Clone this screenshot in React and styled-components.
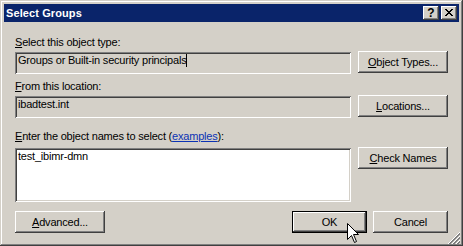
import React from "react";
import styled, { createGlobalStyle } from "styled-components";

const GlobalStyle = createGlobalStyle`
  html, body { margin: 0; padding: 0; background: #d4d0c8; }
  body { font-family: "Liberation Sans", Arial, sans-serif; font-size: 11px; color: #000; letter-spacing: -0.2px; }
`;

const raised = `
  box-shadow: inset -1px -1px #404040, inset 1px 1px #ffffff,
    inset -2px -2px #808080, inset 2px 2px #d4d0c8;
`;

const sunken = `
  box-shadow: inset 1px 1px #808080, inset -1px -1px #ffffff,
    inset 2px 2px #404040, inset -2px -2px #d4d0c8;
`;

const Window = styled.div`
  position: relative;
  width: 463px;
  height: 246px;
  box-sizing: border-box;
  padding: 4px;
  background: #d4d0c8;
  box-shadow: inset -1px -1px #404040, inset 1px 1px #d4d0c8,
    inset -2px -2px #808080, inset 2px 2px #ffffff;
  display: flex;
  flex-direction: column;
  overflow: hidden;
`;

const TitleBar = styled.div`
  height: 18px;
  background: #0a246a;
  display: flex;
  align-items: center;
  padding: 0 2px;
  gap: 2px;
`;

const Title = styled.div`
  flex: 1;
  color: #fff;
  font-weight: bold;
  font-size: 11px;
  line-height: 13px;
  letter-spacing: 0.1px;
`;

const CaptionButton = styled.div`
  width: 16px;
  height: 14px;
  box-sizing: border-box;
  background: #d4d0c8;
  ${raised}
  display: flex;
  align-items: center;
  justify-content: center;
  font-weight: bold;
  font-size: 12px;
  line-height: 12px;
  padding-bottom: 1px;
  letter-spacing: 0;
`;

const Content = styled.div`
  padding: 14px 11px 0 11px;
  display: flex;
  flex-direction: column;
`;

const Section = styled.div`
  display: grid;
  grid-template-columns: 336px 90px;
  column-gap: 7px;
  margin-top: ${(p) => p.$gap || 0}px;
`;

const Label = styled.div`
  grid-column: 1;
  line-height: 13px;
  margin-bottom: ${(p) => p.$below || 3}px;
  white-space: nowrap;
`;

const Field = styled.div`
  grid-column: 1;
  height: ${(p) => p.$h || 22}px;
  box-sizing: border-box;
  padding: 2px 3px;
  line-height: 13px;
  background: ${(p) => (p.$white ? "#ffffff" : "#d4d0c8")};
  ${sunken}
  white-space: nowrap;
`;

const Caret = styled.span`
  display: inline-block;
  width: 1px;
  height: 13px;
  background: #000;
  vertical-align: top;
`;

const Button = styled.div`
  height: 22px;
  width: ${(p) => p.$w || 90}px;
  box-sizing: border-box;
  background: #d4d0c8;
  ${(p) =>
    p.$default
      ? `border: 1px solid #000;
         box-shadow: inset -1px -1px #404040, inset 1px 1px #ffffff,
           inset -2px -2px #808080, inset 2px 2px #d4d0c8;`
      : raised}
  display: flex;
  align-items: center;
  justify-content: center;
  line-height: 13px;
  white-space: nowrap;
`;

const SideButton = styled(Button)`
  grid-column: 2;
  grid-row: 2;
  margin-top: -1px;
  align-self: start;
`;

const Key = styled.span`
  text-decoration: underline;
`;

const Link = styled.span`
  color: #0b33b5;
  text-decoration: underline;
`;

const Footer = styled.div`
  margin-top: 9px;
  display: flex;
  justify-content: space-between;
`;

const ButtonGroup = styled.div`
  display: flex;
  gap: 6px;
`;

const Grip = styled.svg`
  position: absolute;
  right: 3px;
  bottom: 2px;
`;

const Cursor = styled.svg`
  position: absolute;
  left: 347px;
  top: 223px;
`;

function CloseGlyph() {
  const rows = [
    [0, 1, 6, 7],
    [1, 2, 5, 6],
    [2, 3, 4, 5],
    [3, 4],
    [2, 3, 4, 5],
    [1, 2, 5, 6],
    [0, 1, 6, 7],
  ];
  return (
    <svg width="8" height="7" viewBox="0 0 8 7" shapeRendering="crispEdges">
      {rows.map((cols, y) =>
        cols.map((x) => <rect key={`${x}-${y}`} x={x} y={y} width="1" height="1" fill="#000" />)
      )}
    </svg>
  );
}

function SizeGrip() {
  const offs = [0, 4, 8];
  return (
    <Grip width="12" height="12" viewBox="0 0 12 12" shapeRendering="crispEdges">
      {offs.map((o) => (
        <g key={o}>
          <path d={`M${o} 12 L12 ${o}`} stroke="#ffffff" strokeWidth="1" />
          <path d={`M${o + 1} 12 L12 ${o + 1}`} stroke="#808080" strokeWidth="1" />
          <path d={`M${o + 2} 12 L12 ${o + 2}`} stroke="#808080" strokeWidth="1" />
        </g>
      ))}
    </Grip>
  );
}

function Pointer() {
  return (
    <Cursor width="13" height="21" viewBox="0 0 13 21">
      <path
        d="M0.5 0.5 L0.5 16.5 L4.5 12.5 L7.5 19.5 L9.5 18.5 L6.5 11.5 L11.5 11.5 Z"
        fill="#fff"
        stroke="#000"
        strokeWidth="1"
        strokeLinejoin="miter"
      />
    </Cursor>
  );
}

export default function App() {
  return (
    <>
      <GlobalStyle />
      <Window>
        <TitleBar>
          <Title>Select Groups</Title>
          <CaptionButton>?</CaptionButton>
          <CaptionButton>
            <CloseGlyph />
          </CaptionButton>
        </TitleBar>
        <Content>
          <Section>
            <Label>
              <Key>S</Key>elect this object type:
            </Label>
            <Field>
              Groups or Built-in security principals<Caret />
            </Field>
            <SideButton>
              <span>
                <Key>O</Key>bject Types...
              </span>
            </SideButton>
          </Section>
          <Section $gap={6}>
            <Label>
              <Key>F</Key>rom this location:
            </Label>
            <Field>ibadtest.int</Field>
            <SideButton>
              <span>
                <Key>L</Key>ocations...
              </span>
            </SideButton>
          </Section>
          <Section $gap={12}>
            <Label $below={5}>
              <Key>E</Key>nter the object names to select (<Link>examples</Link>):
            </Label>
            <Field $white $h={54}>
              test_ibimr-dmn
            </Field>
            <SideButton>
              <span>
                <Key>C</Key>heck Names
              </span>
            </SideButton>
          </Section>
          <Footer>
            <Button $w={90}>
              <span>
                <Key>A</Key>dvanced...
              </span>
            </Button>
            <ButtonGroup>
              <Button $w={75} $default>
                OK
              </Button>
              <Button $w={75}>Cancel</Button>
            </ButtonGroup>
          </Footer>
        </Content>
        <SizeGrip />
        <Pointer />
      </Window>
    </>
  );
}
